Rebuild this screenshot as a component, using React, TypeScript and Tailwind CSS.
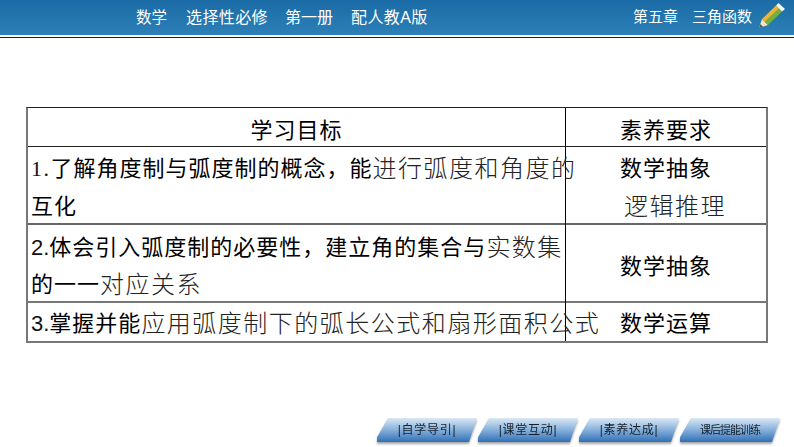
const SANS = "font-['Liberation_Sans','Noto_Sans_CJK_SC',sans-serif]";

function B({ children }: { children: React.ReactNode }) {
  return <span className="text-[22px] leading-[30px] font-normal tracking-[1px] text-black">{children}</span>;
}
function L({ children }: { children: React.ReactNode }) {
  return <span className="text-[24px] leading-[30px] font-light tracking-[1.5px] text-[#222]">{children}</span>;
}
function D({ children }: { children: React.ReactNode }) {
  return <span className="text-[22px] leading-[30px] tracking-[0px] text-[#111]">{children}</span>;
}

function Pencil() {
  return (
    <svg width="26" height="26" viewBox="0 0 26 26" className="shrink-0">
      <polygon points="0,25 3,16 9,22" fill="#f3e3c0" />
      <polygon points="0,25 1.5,21 4,24" fill="#555" />
      <polygon points="3,16 17,2.5 20,5.5 6,19" fill="#f1b32c" />
      <polygon points="6,19 20,5.5 23,8.5 9,22" fill="#6fb23c" />
      <polygon points="17,2.5 19.5,0 26,6 23,8.5" fill="#f4f4f4" />
    </svg>
  );
}

function NavButton({ label, squeezed }: { label: string; squeezed?: boolean }) {
  return (
    <div className="w-[100px] h-[24px] drop-shadow-[0_2px_1px_rgba(0,0,0,0.35)]">
      <div className="w-full h-full flex items-center justify-center bg-gradient-to-b from-[#dbe8f4] via-[#86b0da] to-[#2f70b6] [clip-path:polygon(11px_0,100%_0,calc(100%-8px)_100%,0_100%,0_80%)]">
        <span className={squeezed ? "text-[11px] tracking-[-1px] text-[#14202c]" : "text-[12px] tracking-[0.7px] text-[#14202c]"}>{label}</span>
      </div>
    </div>
  );
}

export default function App() {
  return (
    <div className={`w-[794px] h-[447px] bg-white flex flex-col overflow-hidden ${SANS}`}>
      <header className="h-[35px] bg-gradient-to-b from-[#1b6ba6] to-[#2b80b6] flex items-center pl-[136px] pr-[9px] text-white shrink-0">
        <span className="text-[15.5px]">数学</span>
        <span className="ml-[19px] text-[16px] tracking-[0.4px]">选择性必修</span>
        <span className="ml-[17px] text-[16px]">第一册</span>
        <span className="ml-[18px] text-[16px] tracking-[0.4px]">配人教A版</span>
        <span className="ml-auto text-[15px]">第五章</span>
        <span className="ml-[14px] text-[15px]">三角函数</span>
        <span className="ml-[7px] -mt-[3px]"><Pencil /></span>
      </header>
      <div className="h-[2px] bg-white shrink-0" />
      <div className="h-[1px] bg-[#222] shrink-0" />

      <main className="mt-[69px] ml-[26px] w-[742px] border-t border-t-[#222] border-b-2 border-b-[#777] border-l-2 border-l-[#777] border-r-2 border-r-[#777]">
        <div className="grid grid-cols-[538px_1fr] h-[39px] border-b border-b-[#222]">
          <div className="border-r border-r-black flex items-center justify-center pt-[7px]"><B>学习目标</B></div>
          <div className="flex items-center pl-[54px] pt-[7px]"><B>素养要求</B></div>
        </div>
        <div className="grid grid-cols-[538px_1fr] h-[78px] border-b-2 border-b-[#666]">
          <div className="border-r border-r-black pl-[3px] pt-[5px] whitespace-nowrap">
            <div className="h-[34px] flex items-center"><D><span className="font-['Liberation_Serif'] tracking-[1.5px]">1.</span></D><B>了解角度制与弧度制的概念，能</B><L>进行弧度和角度的</L></div>
            <div className="h-[39px] mt-[1px] flex items-center"><B>互化</B></div>
          </div>
          <div className="pl-[54px] pt-[5px]">
            <div className="h-[34px] flex items-center"><B>数学抽象</B></div>
            <div className="h-[39px] mt-[1px] flex items-center pl-[4px]"><L>逻辑推理</L></div>
          </div>
        </div>
        <div className="grid grid-cols-[538px_1fr] h-[78px] border-b-2 border-b-[#777]">
          <div className="border-r border-r-black pl-[3px] pt-[4px] whitespace-nowrap">
            <div className="h-[38px] flex items-center"><D>2.</D><B>体会引入弧度制的必要性，建立角的集合与</B><L>实数集</L></div>
            <div className="h-[38px] -mt-[1px] flex items-center"><B>的一一</B><L>对应关系</L></div>
          </div>
          <div className="flex items-center pl-[54px] pt-[4px]"><B>数学抽象</B></div>
        </div>
        <div className="grid grid-cols-[538px_1fr] h-[38px]">
          <div className="border-r border-r-black pl-[3px] pt-[4px] whitespace-nowrap flex items-center"><D>3.</D><B>掌握并能</B><L>应用弧度制下的弧长公式和扇形面积公式</L></div>
          <div className="flex items-center pl-[54px] pt-[4px]"><B>数学运算</B></div>
        </div>
      </main>

      <footer className="mt-auto mb-[5px] ml-[377px] flex gap-[1px]">
        <NavButton label="|自学导引|" />
        <NavButton label="|课堂互动|" />
        <NavButton label="|素养达成|" />
        <NavButton label="课后提能训练" squeezed />
      </footer>
    </div>
  );
}
